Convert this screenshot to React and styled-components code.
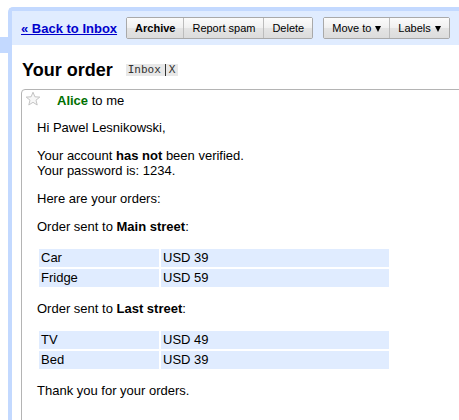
import styled, { createGlobalStyle } from "styled-components";

const GlobalStyle = createGlobalStyle`
  html, body {
    margin: 0;
    padding: 0;
    background: #fff;
    overflow: hidden;
  }
  body {
    font-family: "Liberation Sans", Arial, sans-serif;
    font-size: 13px;
    color: #000;
  }
`;

const Page = styled.div`
  display: flex;
  padding-top: 7px;
  width: 100%;
  box-sizing: border-box;
`;

const LeftNav = styled.div`
  width: 8px;
  flex: none;
  padding-top: 30px;
`;

const NavTab = styled.div`
  height: 16px;
  background: #c3d9ff;
`;

const Main = styled.div`
  flex: 1;
  min-width: 0;
  min-height: 420px;
  background: #fff;
  border-top: 4px solid #c3d9ff;
  border-left: 4px solid #c3d9ff;
  border-top-left-radius: 5px;
`;

const Toolbar = styled.div`
  display: flex;
  align-items: center;
  height: 34px;
  padding-left: 9px;
  background: #e0ecff;
`;

const BackLink = styled.a`
  color: #0000cc;
  font-weight: bold;
  font-size: 13px;
  text-decoration: underline;
  margin-right: 9px;
  white-space: nowrap;
`;

const ButtonGroup = styled.div`
  display: flex;
  border: 1px solid #a9a9a9;
  border-radius: 2px;
  margin-right: 10px;
`;

const Button = styled.div`
  display: flex;
  align-items: center;
  gap: 4px;
  height: 20px;
  padding: 0 8px;
  font-size: 11px;
  font-weight: ${(p) => (p.$bold ? "bold" : "normal")};
  white-space: nowrap;
  background: linear-gradient(to bottom, #fbfbfb 0%, #f0f0f0 50%, #e4e4e4 51%, #dcdcdc 100%);
  & + & {
    border-left: 1px solid #bcbcbc;
  }
`;

const Arrow = styled.span`
  width: 0;
  height: 0;
  border-left: 3px solid transparent;
  border-right: 3px solid transparent;
  border-top: 6px solid #000;
  margin-top: 1px;
`;

const TitleRow = styled.div`
  display: flex;
  align-items: center;
  padding: 14px 0 0 10px;
`;

const Title = styled.h1`
  margin: 0;
  font-size: 18px;
  line-height: 22px;
  font-weight: bold;
`;

const Label = styled.span`
  display: flex;
  align-items: center;
  margin-left: 13px;
  height: 12px;
  padding: 0 3px 0 2px;
  background: #e8e8e8;
  color: #333;
  font-family: "DejaVu Sans Mono", "Liberation Mono", monospace;
  font-size: 11px;
  line-height: 12px;
`;

const LabelDivider = styled.span`
  width: 1px;
  height: 12px;
  background: #333;
  margin: 0 3px 0 4px;
`;

const Card = styled.div`
  margin: 8px -30px 0 9px;
  border: 1px solid #b4b4b4;
  border-top-left-radius: 4px;
  min-height: 400px;
`;

const CardHeader = styled.div`
  display: flex;
  align-items: flex-start;
  padding: 1px 3px 0;
`;

const Sender = styled.div`
  padding-top: 2px;
  margin-left: 16px;
  line-height: 15px;
`;

const SenderName = styled.span`
  color: #007000;
  font-weight: bold;
`;

const Body = styled.div`
  padding: 12px 0 0 15px;
  line-height: 15px;
`;

const Para = styled.p`
  margin: 0 0 13px;
`;

const OrderTable = styled.table`
  border-collapse: separate;
  border-spacing: 2px;
  margin: 0 0 12px;
`;

const Cell = styled.td`
  background: #e0ecff;
  padding: 1px 2px;
  height: 16px;
  line-height: 16px;
  width: ${(p) => p.$width}px;
`;

const Star = () => (
  <svg width="16" height="16" viewBox="0 0 16 16">
    <path
      d="M8 1.2 L9.9 5.8 L14.8 6.1 L11 9.2 L12.2 14 L8 11.3 L3.8 14 L5 9.2 L1.2 6.1 L6.1 5.8 Z"
      fill="#f7f7f7"
      stroke="#c4c4c4"
      strokeWidth="1"
      strokeLinejoin="round"
    />
  </svg>
);

const orders = [
  {
    street: "Main street",
    items: [
      ["Car", "USD 39"],
      ["Fridge", "USD 59"],
    ],
  },
  {
    street: "Last street",
    items: [
      ["TV", "USD 49"],
      ["Bed", "USD 39"],
    ],
  },
];

const App = () => {
  return (
    <>
      <GlobalStyle />
      <Page>
        <LeftNav>
          <NavTab />
        </LeftNav>
        <Main>
          <Toolbar>
            <BackLink href="#">« Back to Inbox</BackLink>
            <ButtonGroup>
              <Button $bold>Archive</Button>
              <Button>Report spam</Button>
              <Button>Delete</Button>
            </ButtonGroup>
            <ButtonGroup>
              <Button>
                Move to <Arrow />
              </Button>
              <Button>
                Labels <Arrow />
              </Button>
            </ButtonGroup>
          </Toolbar>

          <TitleRow>
            <Title>Your order</Title>
            <Label>
              Inbox
              <LabelDivider />X
            </Label>
          </TitleRow>

          <Card>
            <CardHeader>
              <Star />
              <Sender>
                <SenderName>Alice</SenderName> to me
              </Sender>
            </CardHeader>
            <Body>
              <Para>Hi Pawel Lesnikowski,</Para>
              <Para>
                Your account <b>has not</b> been verified.
                <br />
                Your password is: 1234.
              </Para>
              <Para>Here are your orders:</Para>
              {orders.map((order) => (
                <div key={order.street}>
                  <Para>
                    Order sent to <b>{order.street}</b>:
                  </Para>
                  <OrderTable>
                    <tbody>
                      {order.items.map(([name, price]) => (
                        <tr key={name}>
                          <Cell $width={116}>{name}</Cell>
                          <Cell $width={224}>{price}</Cell>
                        </tr>
                      ))}
                    </tbody>
                  </OrderTable>
                </div>
              ))}
              <Para>Thank you for your orders.</Para>
            </Body>
          </Card>
        </Main>
      </Page>
    </>
  );
};

export default App;
